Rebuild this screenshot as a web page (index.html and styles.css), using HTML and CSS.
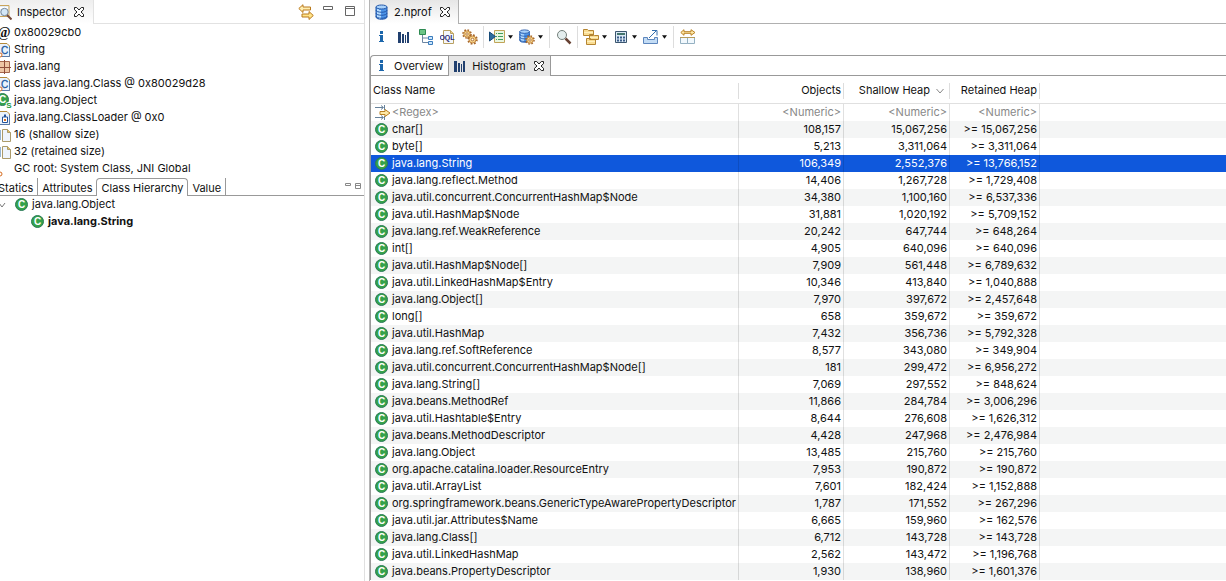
FILE: index.html
```html
<!DOCTYPE html>
<html lang="en">
<head>
    <meta charset="UTF-8">
    <meta name="viewport" content="width=device-width, initial-scale=1.0">
    <title>Memory Analyzer - 2.hprof</title>
    <link rel="stylesheet" href="styles.css">
</head>
<body>
    <!-- Shared icons -->
    <svg class="sprite" aria-hidden="true">
        <symbol id="class" viewBox="0 0 14 14">
            <circle cx="6.500" cy="6.500" r="6" fill="#35a24a" stroke="#2a7a58"/>
            <text x="6.500" y="10" text-anchor="middle" font-family="Liberation Sans, sans-serif" font-size="10" font-weight="bold" fill="#fff">C</text>
        </symbol>
        <symbol id="close" viewBox="0 0 12 12">
            <path d="M1.500 1.500h2.200L6 4l2.300-2.500h2.200v2.200L8 6l2.500 2.300v2.200H8.300L6 8 3.700 10.500H1.500V8.300L4 6 1.500 3.700z" fill="#fff" stroke="#222"/>
        </symbol>
        <symbol id="info" viewBox="0 0 16 16">
            <path d="M6 2h3v3H6zM5 6h4v6h1v1H5v-1h1V7H5z" fill="#1c66ab"/>
        </symbol>
        <symbol id="bars" viewBox="0 0 16 16">
            <path d="M2 3h3v11H2zM6 5h2v9H6zM9 6h1v8H9zM11 3h2v11h-2z" fill="#21406f"/>
        </symbol>
        <symbol id="db" viewBox="0 0 16 16">
            <path d="M2 3v10c0 3 11 3 11 0V3z" fill="#4d94e8" stroke="#2457a8"/>
            <path d="M4 5v9M6 6v9" stroke="#b5dcff" stroke-width="2"/>
            <ellipse cx="7.500" cy="3" rx="5.500" ry="2" fill="#a9d2fb" stroke="#2457a8"/>
            <path d="M2 6c0 3 11 3 11 0M2 9c0 3 11 3 11 0M2 12c0 3 11 3 11 0" fill="none" stroke="#2457a8"/>
        </symbol>
        <symbol id="gear" viewBox="0 0 10 10">
            <circle cx="5" cy="5" r="4" fill="none" stroke="#a8682b" stroke-width="1.600" stroke-dasharray="1.600 1.540"/>
            <circle cx="5" cy="5" r="3.200" fill="#f7d48b" stroke="#b9792f" stroke-width=".8"/>
            <circle cx="5" cy="5" r="1.200" fill="#fff" stroke="#a8682b" stroke-width=".8"/>
        </symbol>
        <symbol id="caret" viewBox="0 0 6 4">
            <path d="M0 0h6L3 4z" fill="#111"/>
        </symbol>
        <symbol id="type" viewBox="0 0 16 16">
            <path d="M3 1.500h8l2.500 2.500v10.500H3z" fill="#e9f2fc" stroke="#b48a3a"/>
            <path d="M13.500 5v9.500H3" fill="none" stroke="#5c7ba8"/>
            <text x="8.500" y="12" text-anchor="middle" font-family="Liberation Sans, sans-serif" font-size="10" fill="#1d5aa0" stroke="#1d5aa0" stroke-width=".3">C</text>
            <circle cx="4" cy="13" r="2" fill="#fff" stroke="#d66b1f"/>
        </symbol>
        <symbol id="file" viewBox="0 0 16 16">
            <path d="M1 3h3M1 13h3M4 3v10" stroke="#2c68a3" fill="none"/>
            <path d="M6.500 2.500h5l3 3v9h-8z" fill="#eef4fd" stroke="#ab9a6a"/>
            <path d="M11.500 2.500v3h3" fill="#e7c36b" stroke="#ab9a6a"/>
        </symbol>
    </svg>

    <div class="workbench">
        <aside class="inspector">
            <header class="view-header">
                <div class="view-tab">
                    <svg class="icon" viewBox="0 0 16 16"><path d="M1 1.500h12v11H1z" fill="#e3edf6" stroke="#caa45a"/><path d="M2 4h10" stroke="#fff" stroke-width="2"/><circle cx="8.500" cy="8" r="3.700" fill="#d3e7f7" stroke="#77889a"/><path d="M11 11l4.500 4.500" stroke="#754b3d" stroke-width="2"/></svg>
                    <span>Inspector</span>
                    <button class="close" aria-label="Close Inspector"><svg><use href="#close"/></svg></button>
                </div>
                <div class="view-tools">
                    <button aria-label="Link with editor"><svg class="icon" viewBox="0 0 16 16"><path d="M.800 4.500L5 .700v2.300h7.500v3H5v2.500z" fill="#ffeeb0" stroke="#b9791c"/><path d="M15.300 11.500L11 7.500V10H4v3h7v2.500z" fill="#ffe48a" stroke="#b9791c"/></svg></button>
                    <button aria-label="Minimize"><svg class="icon" viewBox="0 0 16 16"><path d="M3.500 2.500h9v3h-9z" fill="#fff" stroke="#666"/></svg></button>
                    <button aria-label="Maximize"><svg class="icon" viewBox="0 0 16 16"><path d="M3.500 2.500h9v9h-9zM3.500 4.500h9" fill="#fff" stroke="#666"/></svg></button>
                </div>
            </header>

            <ul class="facts">
                <li><svg class="icon" viewBox="0 0 16 16"><text x="8" y="12" text-anchor="middle" font-family="Liberation Serif, serif" font-size="14" font-weight="bold" fill="#111">@</text></svg>0x80029cb0</li>
                <li><svg class="icon"><use href="#type"/></svg>String</li>
                <li><svg class="icon" viewBox="0 0 16 16"><path d="M2.500 2.500h11v11h-11z" fill="#edc5a4" stroke="#a5664c"/><path d="M8.500 1v14M0 8.500h15" stroke="#8d4c3a"/></svg>java.lang</li>
                <li><svg class="icon"><use href="#type"/></svg>class java.lang.Class @ 0x80029d28</li>
                <li><svg class="icon" viewBox="0 0 16 16"><circle cx="6.500" cy="6.500" r="6" fill="#35a24a" stroke="#2a7a58"/><text x="6.500" y="10" text-anchor="middle" font-family="Liberation Sans, sans-serif" font-size="10" font-weight="bold" fill="#fff">C</text><text x="13" y="15" text-anchor="middle" font-family="Liberation Sans, sans-serif" font-size="8" font-weight="bold" fill="#1d9a3e" stroke="#fff" stroke-width="2" paint-order="stroke">S</text></svg>java.lang.Object</li>
                <li><svg class="icon" viewBox="0 0 16 16"><path d="M3 1.500h8l2.500 2.500v10.500H3z" fill="#e9f2fc" stroke="#b48a3a"/><path d="M13.500 5v9.500H3" fill="none" stroke="#5c7ba8"/><path d="M6.500 7h5v5.500h-5z" fill="#fff" stroke="#24549a"/><path d="M8 4.500h2V7H8z" fill="#24549a"/><path d="M8 9h2v2H8z" fill="#d66b1f"/></svg>java.lang.ClassLoader @ 0x0</li>
                <li><svg class="icon"><use href="#file"/></svg>16 (shallow size)</li>
                <li><svg class="icon"><use href="#file"/></svg>32 (retained size)</li>
                <li><svg class="icon" viewBox="0 0 16 16"><circle cx="4" cy="13" r="2" fill="#fff" stroke="#d66b1f"/></svg>GC root: System Class, JNI Global</li>
            </ul>

            <nav class="detail-tabs">
                <button class="detail-tab">Statics</button>
                <button class="detail-tab">Attributes</button>
                <button class="detail-tab active">Class Hierarchy</button>
                <button class="detail-tab">Value</button>
                <div class="detail-tools">
                    <button aria-label="Minimize details"><svg viewBox="0 0 8 8"><path d="M1.500.500h5v2h-5z" fill="#fff" stroke="#888"/></svg></button>
                    <button aria-label="Maximize details"><svg viewBox="0 0 8 8"><path d="M1.500.500h5v5h-5zM1.500 2.500h5" fill="#fff" stroke="#888"/></svg></button>
                </div>
            </nav>

            <ul class="tree">
                <li>
                    <svg class="twisty" viewBox="0 0 8 8"><path d="M1 2l3 4 3-4" fill="none" stroke="#777"/></svg>
                    <svg class="class-icon"><use href="#class"/></svg>
                    <span>java.lang.Object</span>
                </li>
                <li class="child">
                    <svg class="class-icon"><use href="#class"/></svg>
                    <span>java.lang.String</span>
                </li>
            </ul>
        </aside>

        <main class="editor">
            <header class="editor-header">
                <div class="editor-tab">
                    <svg class="icon"><use href="#db"/></svg>
                    <span>2.hprof</span>
                    <button class="close" aria-label="Close 2.hprof"><svg><use href="#close"/></svg></button>
                </div>
            </header>

            <div class="toolbar">
                <button aria-label="Overview"><svg class="icon"><use href="#info"/></svg></button>
                <button aria-label="Histogram"><svg class="icon"><use href="#bars"/></svg></button>
                <button aria-label="Dominator tree"><svg class="icon" viewBox="0 0 16 16"><path d="M4.500 6v7.500H10M4.500 9H10" fill="none" stroke="#6c86a3"/><path d="M1.500.500h6v5h-6z" fill="#6cc486" stroke="#2e8a52"/><path d="M10.500 7.500h4v3h-4zM10.500 12.500h4v3h-4z" fill="#cbe6fc" stroke="#3b7cbd"/></svg></button>
                <button aria-label="OQL"><svg class="icon" viewBox="0 0 16 16"><path d="M3.500 1.500h7l3 3v10h-10z" fill="#f4f6fb" stroke="#b9a162"/><path d="M10.500 1.500v3h3" fill="#efd28a" stroke="#b9a162"/><text x="7" y="11" text-anchor="middle" font-family="Liberation Sans, sans-serif" font-size="7" font-weight="bold" fill="#2c2a78">OQL</text></svg></button>
                <button aria-label="Expert system tests"><svg class="icon" viewBox="0 0 16 16"><use href="#gear" x="0" y="0" width="10" height="10"/><use href="#gear" x="5" y="5" width="11" height="11"/></svg></button>
                <span class="sep"></span>
                <button class="drop" aria-label="Run report"><svg class="icon" viewBox="0 0 16 16"><path d="M5.500 1.500h10v12h-10z" fill="#e9f7df" stroke="#c1a458"/><path d="M7 4.500h1M9 4.500h5M7 7.500h1M9 7.500h5M7 10.500h1M9 10.500h5" stroke="#439d5c"/><path d="M.500 3v9l6-4.500z" fill="#2d6d9d" stroke="#174b78"/></svg><svg class="caret"><use href="#caret"/></svg></button>
                <button class="drop" aria-label="Query browser"><svg class="icon" viewBox="0 0 16 16"><use href="#db" x="-1" y="0" width="14" height="14"/><use href="#gear" x="6" y="6" width="10" height="10"/></svg><svg class="caret"><use href="#caret"/></svg></button>
                <span class="sep"></span>
                <button aria-label="Find object"><svg class="icon" viewBox="0 0 16 16"><circle cx="6" cy="6" r="4.500" fill="#e4eeee" stroke="#74807b"/><path d="M9.500 9.500l5 5" stroke="#674133" stroke-width="2.500"/></svg></button>
                <span class="sep"></span>
                <button class="drop" aria-label="Group result"><svg class="icon" viewBox="0 0 16 16"><g fill="#f9dc91" stroke="#b58532"><path d="M.500.500h4l1 1h5v5H.500zM6.500 5.500h4l1 1h4v4h-9zM3.500 9.500h4l1 1h4v5h-9z"/></g><path d="M1 3.500h9M7 8.500h8M4 12.500h8" stroke="#fff0bd"/></svg><svg class="caret"><use href="#caret"/></svg></button>
                <button class="drop" aria-label="Calculate retained size"><svg class="icon" viewBox="0 0 16 16"><path d="M2.500 2.500h11v11h-11z" fill="#dbe9f5" stroke="#3b566f"/><path d="M4 4h8v2H4z" fill="#43756d"/><path d="M4 8.500h8M4 11.500h8" stroke="#385b89" stroke-width="2" stroke-dasharray="2 1"/></svg><svg class="caret"><use href="#caret"/></svg></button>
                <button class="drop" aria-label="Export"><svg class="icon" viewBox="0 0 16 16"><path d="M.500 8.500h4v2h7v-2h3v6H.500z" fill="#c3dcf5" stroke="#5d86bd"/><path d="M6 9l7-7M9 1.500h5v5" fill="none" stroke="#356fae"/></svg><svg class="caret"><use href="#caret"/></svg></button>
                <span class="sep"></span>
                <button aria-label="Compare to another heap dump"><svg class="icon" viewBox="0 0 16 16"><path d="M.800 3.500L4 .700v2h7v-2l4 2.800-4 2.800v-2H4v2z" fill="#ffe9a6" stroke="#b98124"/><path d="M.500 8.500h7v6h-7zM7.500 8.500h7v6h-7z" fill="#f1f8fd" stroke="#95b1c2"/><path d="M0 8.500h15" stroke="#b79c5c"/></svg></button>
            </div>

            <section class="folder">
                <nav class="page-tabs">
                    <button class="page-tab overview"><svg class="icon"><use href="#info"/></svg>Overview</button>
                    <div class="page-tab active">
                        <svg class="icon"><use href="#bars"/></svg>
                        <span>Histogram</span>
                        <button class="close" aria-label="Close Histogram"><svg><use href="#close"/></svg></button>
                    </div>
                </nav>

                <table class="histogram">
                    <colgroup>
                        <col class="col-name">
                        <col class="col-objects">
                        <col class="col-shallow">
                        <col class="col-retained">
                        <col>
                    </colgroup>
                    <thead>
                        <tr>
                            <th><div>Class Name</div></th>
                            <th><div>Objects</div></th>
                            <th><div>Shallow Heap<svg class="sort" viewBox="0 0 8 8"><path d="M.500 2L4 6l3.500-4" fill="none" stroke="#888"/></svg></div></th>
                            <th><div>Retained Heap</div></th>
                            <th></th>
                        </tr>
                    </thead>
                    <tbody>
                        <tr class="filter">
                            <td><div class="name"><svg class="icon" viewBox="0 0 16 16"><path d="M0 2.500h8M6 .500l2.500 2L6 4.500M0 12.500h8M6 10.500l2.500 2-2.500 2M9.500 0v5M9.500 11v4" fill="none" stroke="#67829b"/><path d="M5 6.500h5v-2l5 3.500-5 3.500v-2H5z" fill="#ffe9a6" stroke="#b98124"/></svg><input type="text" placeholder="&lt;Regex&gt;" aria-label="Filter class name"></div></td>
                            <td><input type="text" placeholder="&lt;Numeric&gt;" aria-label="Filter objects"></td>
                            <td><input type="text" placeholder="&lt;Numeric&gt;" aria-label="Filter shallow heap"></td>
                            <td><input type="text" placeholder="&lt;Numeric&gt;" aria-label="Filter retained heap"></td>
                            <td></td>
                        </tr>
                        <tr><td><div class="name"><svg class="class-icon"><use href="#class"/></svg>char[]</div></td><td>108,157</td><td>15,067,256</td><td>&gt;= 15,067,256</td><td></td></tr>
                        <tr><td><div class="name"><svg class="class-icon"><use href="#class"/></svg>byte[]</div></td><td>5,213</td><td>3,311,064</td><td>&gt;= 3,311,064</td><td></td></tr>
                        <tr class="selected"><td><div class="name"><svg class="class-icon"><use href="#class"/></svg>java.lang.String</div></td><td>106,349</td><td>2,552,376</td><td>&gt;= 13,766,152</td><td></td></tr>
                        <tr><td><div class="name"><svg class="class-icon"><use href="#class"/></svg>java.lang.reflect.Method</div></td><td>14,406</td><td>1,267,728</td><td>&gt;= 1,729,408</td><td></td></tr>
                        <tr><td><div class="name"><svg class="class-icon"><use href="#class"/></svg>java.util.concurrent.ConcurrentHashMap$Node</div></td><td>34,380</td><td>1,100,160</td><td>&gt;= 6,537,336</td><td></td></tr>
                        <tr><td><div class="name"><svg class="class-icon"><use href="#class"/></svg>java.util.HashMap$Node</div></td><td>31,881</td><td>1,020,192</td><td>&gt;= 5,709,152</td><td></td></tr>
                        <tr><td><div class="name"><svg class="class-icon"><use href="#class"/></svg>java.lang.ref.WeakReference</div></td><td>20,242</td><td>647,744</td><td>&gt;= 648,264</td><td></td></tr>
                        <tr><td><div class="name"><svg class="class-icon"><use href="#class"/></svg>int[]</div></td><td>4,905</td><td>640,096</td><td>&gt;= 640,096</td><td></td></tr>
                        <tr><td><div class="name"><svg class="class-icon"><use href="#class"/></svg>java.util.HashMap$Node[]</div></td><td>7,909</td><td>561,448</td><td>&gt;= 6,789,632</td><td></td></tr>
                        <tr><td><div class="name"><svg class="class-icon"><use href="#class"/></svg>java.util.LinkedHashMap$Entry</div></td><td>10,346</td><td>413,840</td><td>&gt;= 1,040,888</td><td></td></tr>
                        <tr><td><div class="name"><svg class="class-icon"><use href="#class"/></svg>java.lang.Object[]</div></td><td>7,970</td><td>397,672</td><td>&gt;= 2,457,648</td><td></td></tr>
                        <tr><td><div class="name"><svg class="class-icon"><use href="#class"/></svg>long[]</div></td><td>658</td><td>359,672</td><td>&gt;= 359,672</td><td></td></tr>
                        <tr><td><div class="name"><svg class="class-icon"><use href="#class"/></svg>java.util.HashMap</div></td><td>7,432</td><td>356,736</td><td>&gt;= 5,792,328</td><td></td></tr>
                        <tr><td><div class="name"><svg class="class-icon"><use href="#class"/></svg>java.lang.ref.SoftReference</div></td><td>8,577</td><td>343,080</td><td>&gt;= 349,904</td><td></td></tr>
                        <tr><td><div class="name"><svg class="class-icon"><use href="#class"/></svg>java.util.concurrent.ConcurrentHashMap$Node[]</div></td><td>181</td><td>299,472</td><td>&gt;= 6,956,272</td><td></td></tr>
                        <tr><td><div class="name"><svg class="class-icon"><use href="#class"/></svg>java.lang.String[]</div></td><td>7,069</td><td>297,552</td><td>&gt;= 848,624</td><td></td></tr>
                        <tr><td><div class="name"><svg class="class-icon"><use href="#class"/></svg>java.beans.MethodRef</div></td><td>11,866</td><td>284,784</td><td>&gt;= 3,006,296</td><td></td></tr>
                        <tr><td><div class="name"><svg class="class-icon"><use href="#class"/></svg>java.util.Hashtable$Entry</div></td><td>8,644</td><td>276,608</td><td>&gt;= 1,626,312</td><td></td></tr>
                        <tr><td><div class="name"><svg class="class-icon"><use href="#class"/></svg>java.beans.MethodDescriptor</div></td><td>4,428</td><td>247,968</td><td>&gt;= 2,476,984</td><td></td></tr>
                        <tr><td><div class="name"><svg class="class-icon"><use href="#class"/></svg>java.lang.Object</div></td><td>13,485</td><td>215,760</td><td>&gt;= 215,760</td><td></td></tr>
                        <tr><td><div class="name"><svg class="class-icon"><use href="#class"/></svg>org.apache.catalina.loader.ResourceEntry</div></td><td>7,953</td><td>190,872</td><td>&gt;= 190,872</td><td></td></tr>
                        <tr><td><div class="name"><svg class="class-icon"><use href="#class"/></svg>java.util.ArrayList</div></td><td>7,601</td><td>182,424</td><td>&gt;= 1,152,888</td><td></td></tr>
                        <tr><td><div class="name"><svg class="class-icon"><use href="#class"/></svg>org.springframework.beans.GenericTypeAwarePropertyDescriptor</div></td><td>1,787</td><td>171,552</td><td>&gt;= 267,296</td><td></td></tr>
                        <tr><td><div class="name"><svg class="class-icon"><use href="#class"/></svg>java.util.jar.Attributes$Name</div></td><td>6,665</td><td>159,960</td><td>&gt;= 162,576</td><td></td></tr>
                        <tr><td><div class="name"><svg class="class-icon"><use href="#class"/></svg>java.lang.Class[]</div></td><td>6,712</td><td>143,728</td><td>&gt;= 143,728</td><td></td></tr>
                        <tr><td><div class="name"><svg class="class-icon"><use href="#class"/></svg>java.util.LinkedHashMap</div></td><td>2,562</td><td>143,472</td><td>&gt;= 1,196,768</td><td></td></tr>
                        <tr><td><div class="name"><svg class="class-icon"><use href="#class"/></svg>java.beans.PropertyDescriptor</div></td><td>1,930</td><td>138,960</td><td>&gt;= 1,601,376</td><td></td></tr>
                    </tbody>
                </table>
            </section>
        </main>
    </div>
</body>
</html>
```
FILE: styles.css
```css
* {
    box-sizing: border-box;
}
body {
    margin: 0;
    font-family: Inter, "Liberation Sans", sans-serif;
    font-size: 11px;
    line-height: 17px;
    color: #111;
    background: #fff;
    overflow: hidden;
}
button {
    font: inherit;
    color: inherit;
    background: none;
    border: 0;
    padding: 0;
    margin: 0;
}
svg {
    display: block;
    flex: none;
}
ul {
    list-style: none;
    margin: 0;
    padding: 0;
}
.sprite {
    display: none;
}
.icon {
    width: 16px;
    height: 16px;
}
.class-icon {
    width: 14px;
    height: 14px;
}
.close svg {
    width: 12px;
    height: 12px;
}

/* the inspector is scrolled a little past the window's left edge */
.workbench {
    display: flex;
    gap: 4px;
    height: 100vh;
    margin-left: -4px;
}

/* Inspector */
.inspector {
    flex: none;
    width: 30%;
    border-right: 1px solid #e0e0e0;
    white-space: nowrap;
    overflow: hidden;
}
.view-header {
    display: flex;
    justify-content: space-between;
    height: 24px;
    border-bottom: 1px solid #e2e2e2;
}
.view-tab {
    display: flex;
    align-items: center;
    gap: 5px;
    height: 24px;
    padding-right: 8px;
    border-right: 1px solid #e2e2e2;
    background: linear-gradient(#eee, #fff);
}
.view-tab .close {
    margin-left: 2px;
}
.view-tools {
    display: flex;
    align-items: center;
    gap: 6px;
    padding-right: 6px;
}
.facts li {
    display: flex;
    align-items: center;
    gap: 2px;
    height: 17px;
}
.detail-tabs {
    display: flex;
    height: 19px;
    padding-top: 1px;
    border-bottom: 1px solid #999;
}
.detail-tab {
    height: 17px;
    padding: 2px 4px 0;
    border-right: 1px solid #999;
}
.detail-tab:first-child {
    padding-left: 2px;
}
.detail-tab.active {
    height: 18px;
    background: #fff;
    border-top: 1px solid #999;
    border-left: 1px solid #999;
    border-radius: 4px 4px 0 0;
    padding-top: 1px;
}
.detail-tab:nth-child(2) {
    border-right: 0;
}
.detail-tools {
    display: flex;
    gap: 2px;
    margin-left: auto;
    padding-right: 2px;
}
.detail-tools svg {
    width: 8px;
    height: 8px;
}
.tree li {
    display: flex;
    align-items: center;
    gap: 3px;
    height: 17px;
    padding-left: 2px;
}
.twisty {
    width: 8px;
    height: 8px;
    margin-right: 6px;
}
.tree .child {
    padding-left: 35px;
    font-weight: bold;
}

/* Editor */
.editor {
    flex: 1;
    min-width: 0;
    border-left: 1px solid #b4b4b4;
}
.editor-header {
    display: flex;
    height: 24px;
    border-bottom: 1px solid #b0b0b0;
}
.editor-tab {
    display: flex;
    align-items: center;
    gap: 4px;
    height: 24px;
    padding: 0 7px 0 4px;
    border-right: 1px solid #b0b0b0;
    background: linear-gradient(#e6e6e6, #fff);
}
.toolbar {
    display: flex;
    align-items: flex-start;
    height: 31px;
    padding: 2px 1px;
}
.toolbar button {
    display: flex;
    align-items: center;
    justify-content: center;
    width: 22px;
    height: 22px;
}
.toolbar .drop {
    justify-content: flex-start;
    gap: 3px;
    width: 30px;
    padding-left: 2px;
}
.caret {
    width: 5px;
    height: 4px;
}
.sep {
    width: 1px;
    height: 22px;
    margin: 0 3px 0 2px;
    background: #ddd;
}

.folder {
    border-top: 1px solid #999;
    border-left: 1px solid #999;
    border-radius: 4px 0 0 0;
}
.page-tabs {
    display: flex;
    height: 20px;
    border-bottom: 1px solid #999;
}
.page-tab {
    display: flex;
    align-items: center;
    gap: 4px;
    height: 20px;
    padding: 0 5px 0 3px;
    border-right: 1px solid #999;
}
.page-tab.overview {
    padding-top: 1px;
    height: 19px;
}
.page-tab.active {
    background: #e6e6e6;
}
.page-tab .close,
.editor-tab .close {
    margin-left: 3px;
}

/* Histogram table */
.histogram {
    width: 100%;
    table-layout: fixed;
    border-collapse: separate;
    border-spacing: 0;
    white-space: nowrap;
}
.col-name {
    width: 368px;
}
.col-objects {
    width: 105px;
}
.col-shallow {
    width: 106px;
}
.col-retained {
    width: 90px;
}
.histogram th {
    height: 28px;
    padding: 2px 0 0;
    font-weight: normal;
    border-bottom: 1px solid #e0e0e0;
}
.histogram th div {
    display: flex;
    align-items: center;
    justify-content: flex-end;
    height: 16px;
    padding: 0 2px;
    border-right: 1px solid #ddd;
}
.histogram th:first-child div {
    justify-content: flex-start;
}
.sort {
    width: 8px;
    height: 8px;
    margin: 0 3px 0 6px;
}
.histogram td {
    height: 17px;
    padding: 0 2px;
    text-align: right;
    border-right: 1px solid rgba(0, 0, 0, 0.12);
}
.histogram td:last-child {
    border-right: 0;
}
.histogram tbody tr:nth-child(even) {
    background: #f4f5f5;
}
.histogram tbody tr.selected {
    color: #fff;
    background: #0f58dc;
}
.name {
    display: flex;
    align-items: center;
    gap: 3px;
    height: 17px;
    padding-left: 2px;
}
.filter .name {
    gap: 1px;
}
.histogram input {
    display: block;
    width: 100%;
    height: 17px;
    padding: 0;
    border: 0;
    outline: 0;
    font: inherit;
    text-align: right;
    background: transparent;
}
.histogram .name input {
    text-align: left;
}
.histogram input::placeholder {
    color: #888;
}
```
